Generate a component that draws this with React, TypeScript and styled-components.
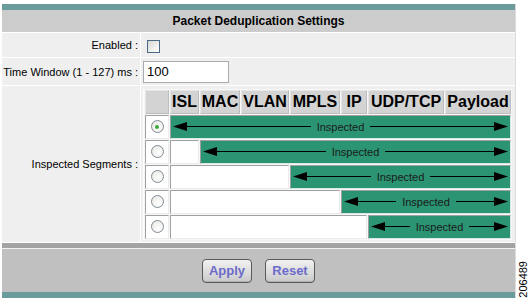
import React from 'react';
import styled, { createGlobalStyle } from 'styled-components';

const GlobalStyle = createGlobalStyle`
  body {
    margin: 0;
    background: #ffffff;
    font-family: "Liberation Sans", Arial, sans-serif;
  }
`;

const Page = styled.div`
  display: flex;
  height: 300px;
  padding: 4px 0 0 2px;
  box-sizing: border-box;
`;

const Panel = styled.div`
  width: 513px;
  display: flex;
  flex-direction: column;
  gap: 1px;
  background: #ffffff;
  border-right: 1px solid #dcdcdc;
  align-self: flex-start;
`;

const TealBar = styled.div<{ $h: number }>`
  height: ${props => props.$h}px;
  background: #6b9c9c;
`;

const TitleRow = styled.div`
  height: 22px;
  margin-top: -1px; /* flush with the teal bar, no white gap */
  background: #cccccc;
  display: flex;
  align-items: center;
  justify-content: center;
  font-size: 12px;
  font-weight: bold;
  color: #000;
`;

const FormRow = styled.div<{ $h: number }>`
  display: grid;
  grid-template-columns: 138px 1fr;
  column-gap: 1px;
  height: ${props => props.$h}px;
`;

const Label = styled.div`
  background: #efefef;
  display: flex;
  align-items: center;
  justify-content: flex-end;
  padding-right: 2px;
  font-size: 11px;
  color: #000;
  white-space: nowrap;
`;

const Value = styled.div<{ $pad?: string }>`
  background: #efefef;
  display: flex;
  align-items: center;
  padding: ${props => props.$pad || '0'};
`;

const CheckBox = styled.span`
  width: 11px;
  height: 11px;
  margin-left: 6px;
  margin-top: 2px;
  border: 1px solid #4b6a88;
  background: linear-gradient(135deg, #d6d6d2 0%, #f4f4f2 70%, #ffffff 100%);
`;

const TextBox = styled.div`
  width: 86px;
  height: 22px;
  box-sizing: border-box;
  margin-left: 2px;
  border: 1px solid #a5acb2;
  background: #ffffff;
  font-size: 13px;
  line-height: 20px;
  padding-left: 3px;
  color: #000;
`;

const SegTable = styled.div`
  display: grid;
  grid-template-columns: 24px 29px 40px 48px 50px 26px 76px 66px;
  grid-auto-rows: 24px;
  column-gap: 1px;
  row-gap: 1px;
  padding: 1px;
  background: #f7f7f7;
  border-left: 1px solid #ffffff;
`;

const HeadCell = styled.div`
  background: #d3d3d3;
  border-top: 1px solid #e6e6e6;
  border-left: 1px solid #e6e6e6;
  border-right: 1px solid #bdbdbd;
  border-bottom: 1px solid #bdbdbd;
  display: flex;
  align-items: center;
  justify-content: center;
  font-size: 16px;
  font-weight: bold;
  color: #000;
`;

const Cell = styled.div<{ $from?: number; $to?: number; $green?: boolean }>`
  grid-column: ${props => (props.$from ? `${props.$from} / ${props.$to}` : 'auto')};
  background: ${props => (props.$green ? '#2a9473' : '#ffffff')};
  border-top: 1px solid #a0a0a0;
  border-left: 1px solid #a0a0a0;
  border-right: 1px solid ${props => (props.$green ? '#d8e8e2' : '#ececec')};
  border-bottom: 1px solid ${props => (props.$green ? '#d8e8e2' : '#ececec')};
  display: flex;
  align-items: center;
  justify-content: center;
  padding: ${props => (props.$green ? '0 2px' : '0')};
`;

const Radio = styled.span<{ $checked?: boolean }>`
  width: 11px;
  height: 11px;
  border-radius: 50%;
  border: 1px solid #7f8b96;
  background: radial-gradient(circle at 60% 65%, #ffffff 0%, #e4e4e0 100%);
  display: flex;
  align-items: center;
  justify-content: center;

  &::after {
    content: '';
    display: ${props => (props.$checked ? 'block' : 'none')};
    width: 4px;
    height: 4px;
    border-radius: 50%;
    background: #3aa83a;
  }
`;

const Line = styled.span`
  flex: 1;
  height: 1px;
  background: #000;
`;

const ArrowText = styled.span`
  margin: 0 6px;
  font-size: 11px;
  color: #1a1a1a;
`;

const ButtonBar = styled.div`
  display: flex;
  flex-direction: column;
`;

const DarkBand = styled.div`
  height: 5px;
  background: #a3a3a3;
  border-bottom: 1px solid #f0f0f0;
`;

const ButtonArea = styled.div`
  height: 43px;
  background: #c0c0c0;
  display: flex;
  align-items: center;
  justify-content: center;
  gap: 13px;
`;

const Button = styled.button`
  width: 50px;
  height: 24px;
  padding: 0;
  border: 1px solid #5a5a5a;
  border-radius: 4px;
  background: linear-gradient(#f2f2f2, #c9c9c9);
  box-shadow: inset 0 -1px 0 #b0b0b0;
  font-family: "Liberation Sans", Arial, sans-serif;
  font-size: 13px;
  font-weight: bold;
  color: #6b6bc9;
  cursor: pointer;
`;

const Side = styled.div`
  width: 13px;
  display: flex;
  flex-direction: column;
  justify-content: flex-end;
  align-items: center;
  padding-bottom: 2px;
`;

const FigNumber = styled.span`
  writing-mode: vertical-rl;
  transform: rotate(180deg);
  font-size: 11px;
  color: #000;
`;

const columns = ['ISL', 'MAC', 'VLAN', 'MPLS', 'IP', 'UDP/TCP', 'Payload'];

// grid column where the inspected part starts (2 = ISL ... 7 = UDP/TCP)
const rows = [
  { start: 2, checked: true },
  { start: 3, checked: false },
  { start: 5, checked: false },
  { start: 6, checked: false },
  { start: 7, checked: false },
];

const Arrow = ({ dir }: { dir: 'left' | 'right' }) => (
  <svg width="14" height="9" viewBox="0 0 14 9">
    <polygon points={dir === 'left' ? '0,4.5 14,0 14,9' : '14,4.5 0,0 0,9'} fill="#000" />
  </svg>
);

const App = () => (
  <>
    <GlobalStyle />
    <Page>
      <Panel>
        <TealBar $h={6} />
        <TitleRow>Packet Deduplication Settings</TitleRow>
        <FormRow $h={24}>
          <Label>Enabled :</Label>
          <Value>
            <CheckBox />
          </Value>
        </FormRow>
        <FormRow $h={27}>
          <Label>Time Window (1 - 127) ms :</Label>
          <Value>
            <TextBox>100</TextBox>
          </Value>
        </FormRow>
        <FormRow $h={156}>
          <Label>Inspected Segments :</Label>
          <Value $pad="0 0 0 2px">
            <SegTable>
              <HeadCell />
              {columns.map(c => (
                <HeadCell key={c}>{c}</HeadCell>
              ))}
              {rows.map((r, i) => (
                <React.Fragment key={i}>
                  <Cell>
                    <Radio $checked={r.checked} />
                  </Cell>
                  {r.start > 2 && <Cell $from={2} $to={r.start} />}
                  <Cell $from={r.start} $to={9} $green>
                    <Arrow dir="left" />
                    <Line />
                    <ArrowText>Inspected</ArrowText>
                    <Line />
                    <Arrow dir="right" />
                  </Cell>
                </React.Fragment>
              ))}
            </SegTable>
          </Value>
        </FormRow>
        <ButtonBar>
          <DarkBand />
          <ButtonArea>
            <Button>Apply</Button>
            <Button>Reset</Button>
          </ButtonArea>
          <TealBar $h={6} />
        </ButtonBar>
      </Panel>
      <Side>
        <FigNumber>206489</FigNumber>
      </Side>
    </Page>
  </>
);

export default App;
